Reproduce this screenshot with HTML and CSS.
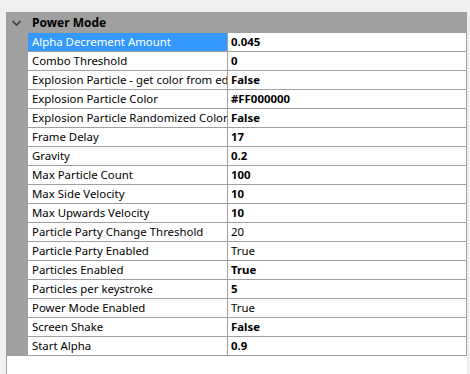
FILE: index.html
```html
<!DOCTYPE html>
<html lang="en">
<head>
    <meta charset="UTF-8">
    <meta name="viewport" content="width=device-width, initial-scale=1.0">
    <title>Properties</title>
    <link rel="stylesheet" href="styles.css">
</head>
<body>

    <div class="grid-panel">
        <!-- Category header -->
        <div class="category">
            <span class="toggle">
                <svg width="21" height="21" viewBox="0 0 21 21">
                    <polyline points="5.5,9 9.5,13 13.5,9" fill="none" stroke="#3c3c3c" stroke-width="1.6"/>
                </svg>
            </span>
            <span class="category-name">Power Mode</span>
        </div>

        <!-- Property rows -->
        <div class="row selected">
            <div class="gutter"></div>
            <div class="name">Alpha Decrement Amount</div>
            <div class="value changed">0.045</div>
        </div>
        <div class="row">
            <div class="gutter"></div>
            <div class="name">Combo Threshold</div>
            <div class="value changed">0</div>
        </div>
        <div class="row">
            <div class="gutter"></div>
            <div class="name">Explosion Particle - get color from editor</div>
            <div class="value changed">False</div>
        </div>
        <div class="row">
            <div class="gutter"></div>
            <div class="name">Explosion Particle Color</div>
            <div class="value changed">#FF000000</div>
        </div>
        <div class="row">
            <div class="gutter"></div>
            <div class="name">Explosion Particle Randomized Color</div>
            <div class="value changed">False</div>
        </div>
        <div class="row">
            <div class="gutter"></div>
            <div class="name">Frame Delay</div>
            <div class="value changed">17</div>
        </div>
        <div class="row">
            <div class="gutter"></div>
            <div class="name">Gravity</div>
            <div class="value changed">0.2</div>
        </div>
        <div class="row">
            <div class="gutter"></div>
            <div class="name">Max Particle Count</div>
            <div class="value changed">100</div>
        </div>
        <div class="row">
            <div class="gutter"></div>
            <div class="name">Max Side Velocity</div>
            <div class="value changed">10</div>
        </div>
        <div class="row">
            <div class="gutter"></div>
            <div class="name">Max Upwards Velocity</div>
            <div class="value changed">10</div>
        </div>
        <div class="row">
            <div class="gutter"></div>
            <div class="name">Particle Party Change Threshold</div>
            <div class="value">20</div>
        </div>
        <div class="row">
            <div class="gutter"></div>
            <div class="name">Particle Party Enabled</div>
            <div class="value">True</div>
        </div>
        <div class="row">
            <div class="gutter"></div>
            <div class="name">Particles Enabled</div>
            <div class="value changed">True</div>
        </div>
        <div class="row">
            <div class="gutter"></div>
            <div class="name">Particles per keystroke</div>
            <div class="value changed">5</div>
        </div>
        <div class="row">
            <div class="gutter"></div>
            <div class="name">Power Mode Enabled</div>
            <div class="value">True</div>
        </div>
        <div class="row">
            <div class="gutter"></div>
            <div class="name">Screen Shake</div>
            <div class="value changed">False</div>
        </div>
        <div class="row">
            <div class="gutter"></div>
            <div class="name">Start Alpha</div>
            <div class="value changed">0.9</div>
        </div>
    </div>

</body>
</html>
```

FILE: styles.css
```css
body {
    font-family: "Noto Sans", "Liberation Sans", sans-serif;
    font-size: 11.4px;
    margin: 0;
    padding: 12px 0 0 6px;
    background-color: #f0f0f0;
    color: #000;
}
.grid-panel {
    width: 460px;
    height: 362px;
    background-color: #fff;
    border-left: 1px solid #a0a0a0;
    overflow: hidden;
}
.category {
    display: flex;
    align-items: center;
    height: 21px;
    background-color: #a0a0a0;
}
.toggle {
    width: 21px;
    height: 21px;
    display: flex;
}
.category-name {
    font-weight: bold;
    font-size: 12px;
    padding-left: 4px;
}
.row {
    display: grid;
    grid-template-columns: 21px 200px 239px;
    height: 19px;
}
.gutter {
    background-color: #a0a0a0;
}
.name, .value {
    line-height: 18px;
    border-bottom: 1px solid #a0a0a0;
    border-right: 1px solid #a0a0a0;
    white-space: nowrap;
    overflow: hidden;
}
.name {
    padding-left: 4px;
}
.value {
    padding-left: 3px;
}
.value.changed {
    font-weight: bold;
}
.row.selected .name {
    background-color: #3399ff;
    color: #fff;
}
```
